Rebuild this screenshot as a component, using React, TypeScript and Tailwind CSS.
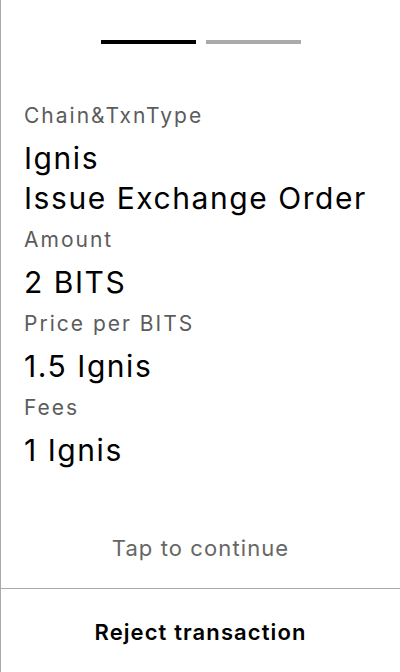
import React from "react";

export default function App() {
  const rows: [string, string[]][] = [
    ["Chain&TxnType", ["Ignis", "Issue Exchange Order"]],
    ["Amount", ["2 BITS"]],
    ["Price per BITS", ["1.5 Ignis"]],
    ["Fees", ["1 Ignis"]],
  ];
  return (
    <div
      className="w-[400px] h-[672px] bg-white border-l border-[#aaaaaa] flex flex-col"
      style={{ fontFamily: "Inter, 'Noto Sans', sans-serif" }}
    >
      <div className="flex-1 flex flex-col">
        <div className="flex justify-center gap-[10px] pt-[40px]">
          <div className="w-[95px] h-[4px] bg-black" />
          <div className="w-[95px] h-[4px] bg-[#aaaaaa]" />
        </div>
        <div className="pl-[23px] pt-[50px]">
          {rows.map(([label, values]) => (
            <div key={label}>
              <div className="text-[21px] leading-[44px] tracking-[2px] text-[#5c5c5c]">{label}</div>
              {values.map((v) => (
                <div key={v} className="text-[30px] leading-[40px] tracking-[1.55px] text-black">
                  {v}
                </div>
              ))}
            </div>
          ))}
        </div>
        <div className="mt-auto pb-[22px] text-center text-[22px] leading-[36px] tracking-[1.1px] text-[#666666]">
          Tap to continue
        </div>
      </div>
      <div className="h-[84px] pt-[3px] border-t border-[#aaaaaa] flex items-center justify-center text-[22px] tracking-[1.1px] font-semibold text-black">
        Reject transaction
      </div>
    </div>
  );
}
